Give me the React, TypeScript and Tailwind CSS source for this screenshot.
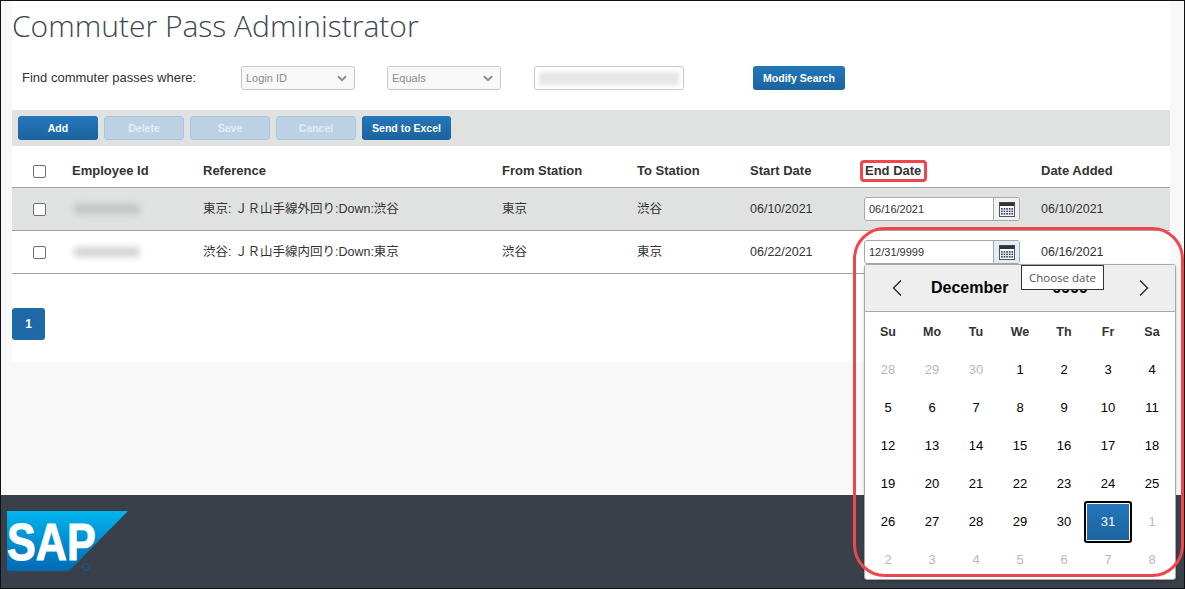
const SANS = "font-['Liberation_Sans','Noto_Sans_CJK_JP',Arial,sans-serif]";

const WEEKS = [
  [28, 29, 30, 1, 2, 3, 4],
  [5, 6, 7, 8, 9, 10, 11],
  [12, 13, 14, 15, 16, 17, 18],
  [19, 20, 21, 22, 23, 24, 25],
  [26, 27, 28, 29, 30, 31, 1],
  [2, 3, 4, 5, 6, 7, 8],
];

function Chevron() {
  return (
    <svg width="10" height="7" viewBox="0 0 10 7" fill="none" stroke="#8a8f94" strokeWidth="2">
      <path d="M1 1.2l4 4 4-4" />
    </svg>
  );
}

function Select({ label, className }: { label: string; className: string }) {
  return (
    <div className={`flex h-6 items-center justify-between rounded-[3px] border border-[#c8c8c8] bg-[#f8f8f8] pl-1 pr-[7px] text-[11px] text-[#8c8c8c] ${className}`}>
      <span>{label}</span>
      <Chevron />
    </div>
  );
}

function Btn({ label, off, wide }: { label: string; off?: boolean; wide?: boolean }) {
  return (
    <div
      className={`flex h-6 items-center justify-center rounded-[3px] pt-px text-[10.5px] font-bold ${wide ? "w-[89px]" : "w-20"} ${
        off
          ? "border border-[#a9c6df] bg-[#bcd2e4] text-[#e4edf4]"
          : "bg-gradient-to-b from-[#2477bb] to-[#1c639e] text-white"
      }`}
    >
      {label}
    </div>
  );
}

function CalIcon() {
  return (
    <svg width="16" height="15" viewBox="0 0 16 15">
      <rect x="0.5" y="0.5" width="15" height="14" fill="#fff" stroke="#555" />
      <rect x="0.5" y="0.5" width="15" height="3.5" fill="#333" />
      {[2, 4.6, 7.2, 9.8, 12.4].map((x) =>
        [6, 8.5, 11].map((y) => <rect key={`${x}-${y}`} x={x} y={y} width="1.7" height="1.7" fill="#3f4a66" />),
      )}
    </svg>
  );
}

function DateInput({ value, active }: { value: string; active?: boolean }) {
  return (
    <div className="flex h-6 w-[156px] overflow-hidden rounded-[3px] border border-[#a8a8a8] bg-white text-[11px] text-[#333]">
      <div className="flex flex-1 items-center pl-1">{value}</div>
      <div className={`flex w-[26px] items-center justify-center border-l border-[#a8a8a8] ${active ? "bg-[#e0eefa]" : "bg-[#f2f2f2]"}`}>
        <CalIcon />
      </div>
    </div>
  );
}

function Checkbox() {
  return <div className="h-[13px] w-[13px] rounded-[2px] border border-[#6f6f6f] bg-white" />;
}

function Row({ from, to, reference, start, end, added, shaded, active }: {
  from: string;
  to: string;
  reference: string;
  start: string;
  end: string;
  added: string;
  shaded?: boolean;
  active?: boolean;
}) {
  return (
    <div className={`flex h-[43px] items-center border-b border-[#a3a3a3] text-[12.5px] text-[#333] ${shaded ? "bg-[#e0e2e1]" : ""}`}>
      <div className="flex w-[60px] justify-center pr-[6px]"><Checkbox /></div>
      <div className="w-[131px] pl-[2px]">
        <div className={`h-[10px] w-[66px] rounded-sm blur-[3px] ${shaded ? "bg-[#c2c4c5]" : "bg-[#d2d3d4]"}`} />
      </div>
      <div className="w-[299px]">{reference}</div>
      <div className="w-[135px]">{from}</div>
      <div className="w-[113px]">{to}</div>
      <div className="w-[114px]">{start}</div>
      <div className="w-[177px]"><DateInput value={end} active={active} /></div>
      <div>{added}</div>
    </div>
  );
}

export default function App() {
  return (
    <div className={`relative flex h-[589px] w-[1185px] flex-col overflow-hidden border border-[#111] bg-[#f8f8f8] ${SANS}`}>
      <main className="flex-1">
        <section className="ml-[11px] h-[361px] w-[1158px] bg-white">
          <h1 className="pt-[5px] font-['Open_Sans',sans-serif] text-[30px] leading-[40px] font-light text-[#3c4650]">
            Commuter Pass Administrator
          </h1>

          <div className="mt-5 flex h-6 items-center text-[13px] text-[#333]">
            <span className="ml-[10px] w-[219px]">Find commuter passes where:</span>
            <Select label="Login ID" className="w-[114px]" />
            <Select label="Equals" className="ml-[32px] w-[114px]" />
            <div className="ml-[33px] flex h-6 w-[150px] items-center rounded-[3px] border border-[#c8c8c8] px-1">
              <div className="h-[13px] w-full bg-[#e6e6e6] blur-[2px]" />
            </div>
            <div className="ml-[69px] flex h-6 w-[92px] items-center justify-center rounded-[3px] bg-gradient-to-b from-[#2477bb] to-[#1c639e] pt-px text-[10.5px] font-bold text-white">
              Modify Search
            </div>
          </div>

          <div className="mt-5 flex h-9 items-center gap-[6px] bg-[#e0e2e1] pl-[6px]">
            <Btn label="Add" />
            <Btn label="Delete" off />
            <Btn label="Save" off />
            <Btn label="Cancel" off />
            <Btn label="Send to Excel" wide />
          </div>

          <div className="flex h-[42px] items-center border-b border-[#a3a3a3] pt-[9px] text-[13px] font-bold text-[#333]">
            <div className="flex w-[60px] justify-center pr-[6px]"><Checkbox /></div>
            <div className="w-[131px]">Employee Id</div>
            <div className="w-[299px]">Reference</div>
            <div className="w-[135px]">From Station</div>
            <div className="w-[113px]">To Station</div>
            <div className="w-[114px]">Start Date</div>
            <div className="w-[177px] pl-[1px]">End Date</div>
            <div>Date Added</div>
          </div>

          <Row reference="東京: ＪＲ山手線外回り:Down:渋谷" from="東京" to="渋谷" start="06/10/2021" end="06/16/2021" added="06/10/2021" shaded />
          <Row reference="渋谷: ＪＲ山手線内回り:Down:東京" from="渋谷" to="東京" start="06/22/2021" end="12/31/9999" added="06/16/2021" active />

          <div className="mt-[34px] flex h-8 w-[33px] items-center justify-center rounded-[3px] bg-[#1f69a6] text-xs font-bold text-white">1</div>
        </section>
      </main>

      <footer className="h-[93px] shrink-0 bg-[#394049] pl-[6px] pt-4">
        <svg width="122" height="63" viewBox="0 0 122 63">
          <defs>
            <linearGradient id="sap" x1="0" y1="0" x2="0" y2="1">
              <stop offset="0" stopColor="#00b4ee" />
              <stop offset="1" stopColor="#0069b4" />
            </linearGradient>
          </defs>
          <polygon points="0,0 121,0 62,60 0,60" fill="url(#sap)" />
          <text
            transform="translate(0 49) scale(0.83 1)"
            fontFamily="Liberation Sans"
            fontWeight="700"
            fontSize="52"
            stroke="#fff"
            strokeWidth="1"
            fill="#fff"
          >
            SAP
          </text>
          <circle cx="79" cy="56" r="3.5" fill="none" stroke="#0a5ea8" />
        </svg>
      </footer>

      {/* calendar popup, sits over the table and footer */}
      <div className="absolute left-[863px] top-[263px] w-[312px] rounded-[3px] border border-[#a8a8a8] bg-white shadow-[0_1px_3px_rgba(0,0,0,0.2)]">
        <div className="flex h-[47px] items-center border-b border-[#a8a8a8] bg-[#eeeeee] text-base font-bold text-black">
          <svg className="ml-[26px]" width="12" height="18" viewBox="0 0 12 18" fill="none" stroke="#222" strokeWidth="1.3">
            <path d="M10 1.5L2.5 9l7.5 7.5" />
          </svg>
          <span className="ml-[28px]">December</span>
          <span className="ml-[44px]">9999</span>
          <svg className="ml-[50px]" width="12" height="18" viewBox="0 0 12 18" fill="none" stroke="#222" strokeWidth="1.3">
            <path d="M2 1.5L9.5 9 2 16.5" />
          </svg>
        </div>
        <div className="ml-[1px] w-[308px] pt-[1px]">
          <div className="grid h-[38px] grid-cols-7 items-center text-[12.5px] font-bold text-[#333]">
            {["Su", "Mo", "Tu", "We", "Th", "Fr", "Sa"].map((d) => (
              <div key={d} className="text-center">{d}</div>
            ))}
          </div>
          {WEEKS.map((week, w) => (
            <div key={w} className="grid h-[38px] grid-cols-7 items-center text-[13px]">
              {week.map((d, i) => {
                const muted = (w === 0 && d > 20) || (w === 4 && d === 1) || w === 5;
                const selected = w === 4 && d === 31;
                if (selected) {
                  return (
                    <div key={i} className="-mx-[2px] -my-[2px] flex h-[42px] items-center justify-center rounded-[3px] border-2 border-black bg-gradient-to-b from-[#2477bb] to-[#1c639e] text-white shadow-[inset_0_0_0_1px_#fff]">
                      {d}
                    </div>
                  );
                }
                return (
                  <div key={i} className={`text-center ${muted ? "text-[#b8b8b8]" : "text-black"}`}>{d}</div>
                );
              })}
            </div>
          ))}
        </div>
      </div>

      {/* tooltip */}
      <div className="absolute left-[1020px] top-[264px] flex h-[25px] w-[83px] items-center justify-center border border-[#333] bg-white font-['Open_Sans',sans-serif] text-[11.5px] text-[#555]">
        Choose date
      </div>

      {/* red callouts */}
      <div className="absolute left-[859px] top-[159px] h-[22px] w-[67px] rounded-[4px] border-[3px] border-[#f0454c]" />
      <div className="absolute left-[852px] top-[226px] h-[350px] w-[331px] rounded-[32px] border-[3px] border-[#f0454c]" />
    </div>
  );
}
